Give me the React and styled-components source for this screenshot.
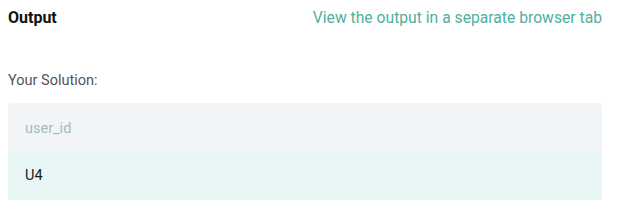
import React from "react";
import styled, { createGlobalStyle } from "styled-components";

const Global = createGlobalStyle`
  body {
    margin: 8px;
    background: #ffffff;
    font-family: Roboto, "Liberation Sans", sans-serif;
  }
`;

const Panel = styled.div`
  width: 594px;
  display: flex;
  flex-direction: column;
`;

const Header = styled.div`
  display: flex;
  justify-content: space-between;
  align-items: center;
  height: 18px;
`;

const Title = styled.h3`
  margin: 0;
  font-size: 16px;
  font-weight: 700;
  color: #111;
`;

const Link = styled.a`
  font-size: 15.7px;
  color: #4fb0a0;
  text-decoration: none;
  cursor: pointer;
`;

const Label = styled.div`
  margin-top: 46px;
  font-size: 14.5px;
  color: #4d5559;
  line-height: 18px;
`;

const Table = styled.div`
  margin-top: 13px;
  border-radius: 4px 4px 0 0;
  overflow: hidden;
`;

const Row = styled.div`
  height: ${(p) => (p.$head ? 48 : 49)}px;
  display: flex;
  align-items: center;
  padding-left: 17px;
  padding-top: ${(p) => (p.$head ? 2 : 0)}px;
  box-sizing: border-box;
  background: ${(p) => (p.$head ? "#f1f5f8" : "#e8f6f5")};
  color: ${(p) => (p.$head ? "#a3bbb8" : "#1a1a1a")};
  font-size: 14.5px;
`;

export default function App() {
  return (
    <>
      <Global />
      <Panel>
        <Header>
          <Title>Output</Title>
          <Link>View the output in a separate browser tab</Link>
        </Header>
        <Label>Your Solution:</Label>
        <Table>
          <Row $head>user_id</Row>
          <Row>U4</Row>
        </Table>
      </Panel>
    </>
  );
}
